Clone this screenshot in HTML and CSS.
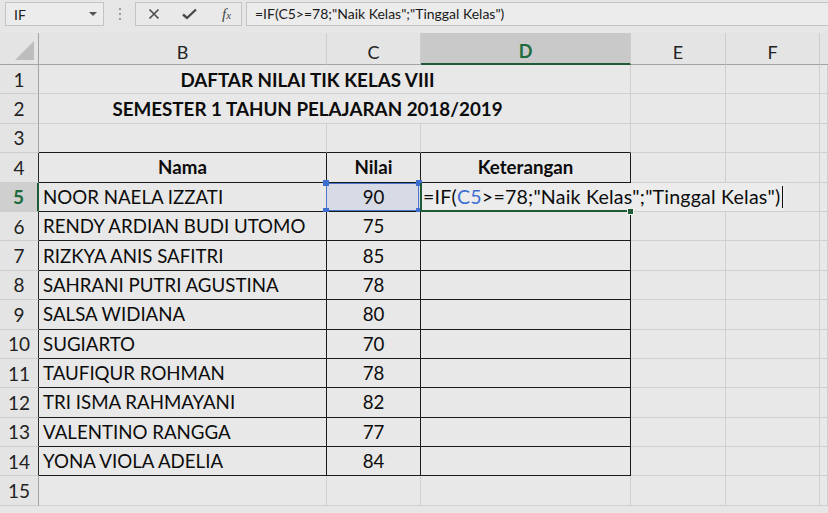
FILE: index.html
```html
<!DOCTYPE html>
<html lang="id">
<head>
  <meta charset="UTF-8">
  <title>Daftar Nilai TIK Kelas VIII</title>
  <link rel="stylesheet" href="styles.css">
</head>
<body>
  <div class="toolbar">
    <div class="namebox">
      <span>IF</span>
      <span class="dropdown"></span>
    </div>
    <div class="grip"><i></i><i></i><i></i></div>
    <div class="fx-buttons">
      <svg class="ico" width="12" height="12" viewBox="0 0 12 12"><path d="M1.5 1.5 L10.5 10.5 M10.5 1.5 L1.5 10.5" stroke="#4a4a4a" stroke-width="1.6" fill="none"/></svg>
      <svg class="ico" width="15" height="12" viewBox="0 0 15 12"><path d="M1 6.5 L5 10 L14 1.5" stroke="#4a4a4a" stroke-width="2.4" fill="none"/></svg>
      <span class="fx"><i>f</i><i class="x">x</i></span>
    </div>
    <div class="formula">=IF(C5&gt;=78;"Naik Kelas";"Tinggal Kelas")</div>
  </div>

  <div class="sheet">
    <!-- kepala kolom -->
    <div class="ch corner"></div>
    <div class="ch">B</div>
    <div class="ch">C</div>
    <div class="ch sel">D</div>
    <div class="ch">E</div>
    <div class="ch">F</div>
    <div class="ch last"></div>

    <div class="rh">1</div>
    <div class="c title span3">DAFTAR NILAI TIK KELAS VIII</div>
    <div class="c"></div><div class="c"></div><div class="c"></div>

    <div class="rh">2</div>
    <div class="c title span3">SEMESTER 1 TAHUN PELAJARAN 2018/2019</div>
    <div class="c"></div><div class="c"></div><div class="c"></div>

    <div class="rh">3</div>
    <div class="c top"></div><div class="c top"></div><div class="c top"></div>
    <div class="c"></div><div class="c"></div><div class="c"></div>

    <div class="rh in">4</div>
    <div class="c t mid bold">Nama</div>
    <div class="c t mid bold">Nilai</div>
    <div class="c t mid bold">Keterangan</div>
    <div class="c"></div><div class="c"></div><div class="c"></div>

    <div class="rh in sel">5</div>
    <div class="c t">NOOR NAELA IZZATI</div>
    <div class="c t mid ref"><span class="refbox"><b class="h tl"></b><b class="h tr"></b><b class="h bl"></b><b class="h br"></b></span><span class="val">90</span></div>
    <div class="c t active">
      <div class="editor">=IF(<span class="blue">C5</span>&gt;=78;"Naik Kelas";"Tinggal Kelas")<span class="caret"></span></div>
      <span class="mark-left"></span><span class="mark-bottom"></span><span class="mark-handle"></span>
    </div>
    <div class="c"></div><div class="c"></div><div class="c"></div>

    <div class="rh in">6</div>
    <div class="c t">RENDY ARDIAN BUDI UTOMO</div><div class="c t mid">75</div><div class="c t"></div>
    <div class="c"></div><div class="c"></div><div class="c"></div>

    <div class="rh in">7</div>
    <div class="c t">RIZKYA ANIS SAFITRI</div><div class="c t mid">85</div><div class="c t"></div>
    <div class="c"></div><div class="c"></div><div class="c"></div>

    <div class="rh in">8</div>
    <div class="c t">SAHRANI PUTRI AGUSTINA</div><div class="c t mid">78</div><div class="c t"></div>
    <div class="c"></div><div class="c"></div><div class="c"></div>

    <div class="rh in">9</div>
    <div class="c t">SALSA WIDIANA</div><div class="c t mid">80</div><div class="c t"></div>
    <div class="c"></div><div class="c"></div><div class="c"></div>

    <div class="rh in">10</div>
    <div class="c t">SUGIARTO</div><div class="c t mid">70</div><div class="c t"></div>
    <div class="c"></div><div class="c"></div><div class="c"></div>

    <div class="rh in">11</div>
    <div class="c t">TAUFIQUR ROHMAN</div><div class="c t mid">78</div><div class="c t"></div>
    <div class="c"></div><div class="c"></div><div class="c"></div>

    <div class="rh in">12</div>
    <div class="c t">TRI ISMA RAHMAYANI</div><div class="c t mid">82</div><div class="c t"></div>
    <div class="c"></div><div class="c"></div><div class="c"></div>

    <div class="rh in">13</div>
    <div class="c t">VALENTINO RANGGA</div><div class="c t mid">77</div><div class="c t"></div>
    <div class="c"></div><div class="c"></div><div class="c"></div>

    <div class="rh in">14</div>
    <div class="c t">YONA VIOLA ADELIA</div><div class="c t mid">84</div><div class="c t"></div>
    <div class="c"></div><div class="c"></div><div class="c"></div>

    <div class="rh">15</div>
    <div class="c"></div><div class="c"></div><div class="c"></div>
    <div class="c"></div><div class="c"></div><div class="c"></div>
  </div>
</body>
</html>
```

FILE: styles.css
```css
body {
  margin: 0;
  background-color: #e6e6e6;
  font-family: Lato, "Noto Sans", sans-serif;
  color: #111;
  overflow: hidden;
}

/* baris rumus */
.toolbar {
  height: 33px;
  display: flex;
  align-items: flex-start;
  padding: 2px 0 0 5px;
  box-sizing: border-box;
}
.namebox {
  width: 99px;
  height: 24px;
  box-sizing: border-box;
  border: 1px solid #c4c4c4;
  background-color: #ececec;
  display: flex;
  align-items: center;
  justify-content: space-between;
  padding: 0 6px 0 8px;
  font-size: 14px;
  color: #222;
}
.dropdown {
  width: 0;
  height: 0;
  border-left: 4px solid transparent;
  border-right: 4px solid transparent;
  border-top: 4px solid #555;
}
.grip {
  width: 31px;
  height: 24px;
  display: flex;
  flex-direction: column;
  align-items: center;
  justify-content: center;
  gap: 3px;
}
.grip i {
  width: 2px;
  height: 2px;
  background-color: #9a9a9a;
}
.fx-buttons {
  width: 107px;
  height: 24px;
  box-sizing: border-box;
  border: 1px solid #c4c4c4;
  background-color: #e9e9e9;
  display: flex;
  align-items: center;
  padding: 0 0 0 12px;
  gap: 22px;
}
.fx {
  font-family: "Liberation Serif", serif;
  font-style: italic;
  font-size: 15px;
  color: #444;
  margin-left: 3px;
}
.fx i { font-style: italic; }
.fx .x { font-size: 11px; }
.formula {
  flex: 1;
  height: 24px;
  margin-left: 4px;
  box-sizing: border-box;
  border: 1px solid #c4c4c4;
  border-right: none;
  background-color: #ececec;
  font-size: 14px;
  color: #1a1a1a;
  line-height: 22px;
  padding-left: 8px;
  white-space: nowrap;
}

/* lembar kerja */
.sheet {
  display: grid;
  grid-template-columns: 39px 288px 94px 210px 95px 94px 1fr;
  grid-template-rows: 32px;
  grid-auto-rows: 29.4px;
}
.ch {
  background-color: #e4e4e4;
  border-right: 1px solid #cdcdcd;
  border-bottom: 1px solid #a3a3a3;
  box-sizing: border-box;
  display: flex;
  align-items: center;
  justify-content: center;
  padding-top: 6px;
  font-size: 18px;
  color: #222;
}
.ch.sel {
  background-color: #c9c9c9;
  border-bottom: 2px solid #1f5b37;
  color: #1d6b3c;
  font-weight: bold;
}
.ch.last { border-right: none; }
.corner {
  position: relative;
  border-right: 1px solid #a3a3a3;
}
.corner::after {
  content: "";
  position: absolute;
  right: 4px;
  bottom: 4px;
  width: 19px;
  height: 19px;
  background-color: #bdbdbd;
  clip-path: polygon(100% 0, 100% 100%, 0 100%);
}
.rh {
  background-color: #e4e4e4;
  border-right: 1px solid #a3a3a3;
  border-bottom: 1px solid #cdcdcd;
  box-sizing: border-box;
  display: flex;
  align-items: center;
  justify-content: center;
  font-size: 19px;
  color: #222;
}
.rh.in { border-right-color: #2a2a2a; }
.rh.sel {
  background-color: #cfcfcf;
  color: #1d6b3c;
  font-weight: bold;
  border-right: 2px solid #1f5b37;
}
.c {
  position: relative;
  background-color: #e8e8e8;
  border-right: 1px solid #cfcfcf;
  border-bottom: 1px solid #cfcfcf;
  box-sizing: border-box;
  display: flex;
  align-items: center;
  padding-left: 4px;
  font-size: 18.7px;
  color: #0c0c0c;
  white-space: nowrap;
}
.span3 {
  grid-column: span 3;
  justify-content: center;
  padding: 0 54px 0 0;
}
.title {
  font-weight: bold;
  font-size: 18.8px;
}
.top { border-bottom-color: #1a1a1a; }
.t {
  border-right-color: #1a1a1a;
  border-bottom-color: #1a1a1a;
}
.mid {
  justify-content: center;
  padding-left: 0;
}
.bold { font-weight: bold; }

/* rujukan C5 di dalam rumus */
.ref { background-color: #d6dbe5; }
.refbox {
  position: absolute;
  left: -1px;
  top: 0;
  right: 1px;
  bottom: 0;
  border: 1.5px solid #4a76cf;
}
.h {
  position: absolute;
  width: 6px;
  height: 6px;
  background-color: #3e6ed0;
}
.h.tl { left: -4px; top: -4px; }
.h.tr { right: -4px; top: -4px; }
.h.bl { left: -4px; bottom: -4px; }
.h.br { right: -4px; bottom: -4px; }
.val { position: relative; }

/* sel aktif D5 sedang disunting */
.active { padding-left: 0; }
.editor {
  position: absolute;
  left: 0;
  top: 0;
  width: 364px;
  height: 28px;
  z-index: 1;
  background-color: #ececec;
  display: flex;
  align-items: center;
  padding-left: 2px;
  box-sizing: border-box;
  font-size: 19.6px;
  letter-spacing: 0.2px;
}
.blue { color: #3d6fd3; }
.caret {
  flex-shrink: 0;
  width: 1px;
  height: 22px;
  margin-left: 2px;
  background-color: #111;
}
.mark-left {
  position: absolute;
  left: -1px;
  top: 0;
  bottom: -1px;
  width: 2px;
  background-color: #1f5b37;
  z-index: 2;
}
.mark-bottom {
  position: absolute;
  left: 0;
  right: 0;
  bottom: -1px;
  height: 2px;
  background-color: #1f5b37;
  z-index: 2;
}
.mark-handle {
  position: absolute;
  right: -4px;
  bottom: -4px;
  width: 5px;
  height: 5px;
  background-color: #1f5b37;
  border: 1px solid #f2f2f2;
  z-index: 3;
}
```
